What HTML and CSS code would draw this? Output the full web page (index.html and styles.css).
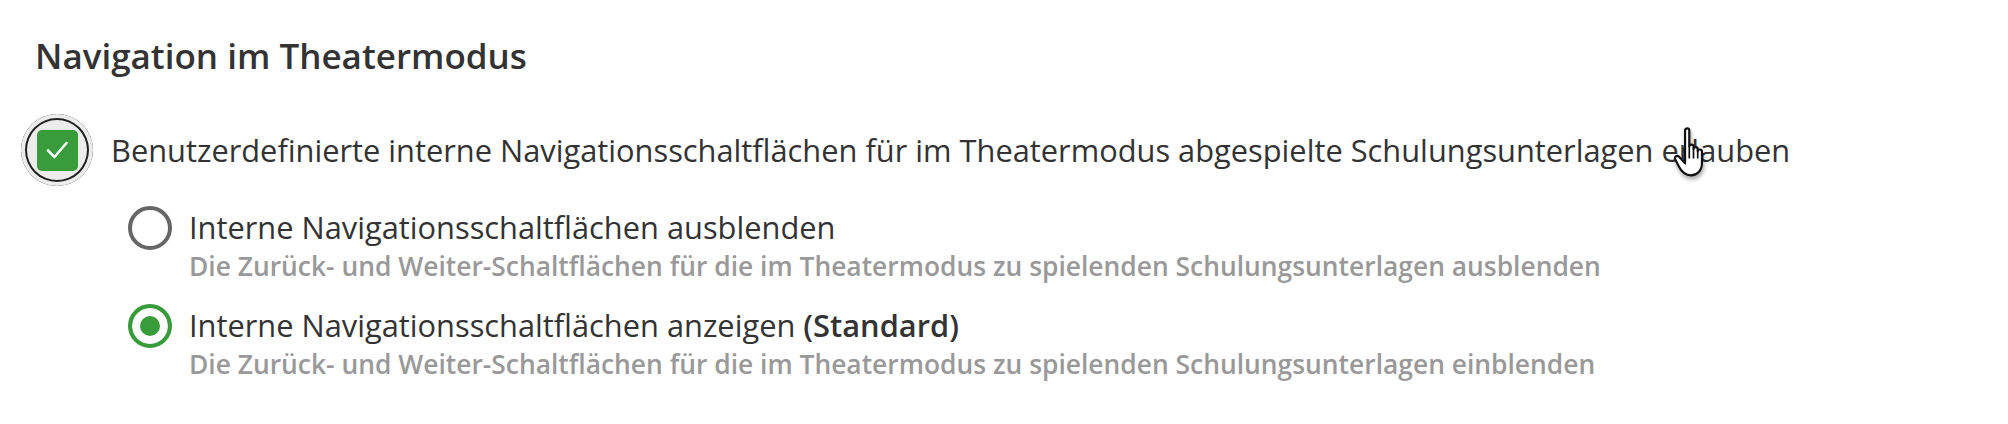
FILE: index.html
```html
<!DOCTYPE html>
<html lang="de">
<head>
    <meta charset="UTF-8">
    <meta name="viewport" content="width=device-width, initial-scale=1.0">
    <title>Navigation im Theatermodus</title>
    <link rel="stylesheet" href="styles.css">
</head>
<body>
    <div class="settings">
        <h2 class="section-title">Navigation im Theatermodus</h2>

        <label class="check-row">
            <span class="check-halo">
                <span class="check-box">
                    <svg width="24" height="20" viewBox="0 0 24 20"><path d="M3 10.5 L9.5 17 L21.5 3" fill="none" stroke="#fff" stroke-width="2.6" stroke-linecap="round" stroke-linejoin="round"/></svg>
                </span>
            </span>
            <span class="check-label">Benutzerdefinierte interne Navigationsschaltflächen für im Theatermodus abgespielte Schulungsunterlagen erlauben</span>
        </label>

        <div class="radio-group">
            <label class="radio-row">
                <span class="radio"></span>
                <span class="radio-text">
                    <span class="radio-label">Interne Navigationsschaltflächen ausblenden</span>
                    <span class="radio-desc">Die Zurück- und Weiter-Schaltflächen für die im Theatermodus zu spielenden Schulungsunterlagen ausblenden</span>
                </span>
            </label>
            <label class="radio-row">
                <span class="radio checked"></span>
                <span class="radio-text">
                    <span class="radio-label">Interne Navigationsschaltflächen anzeigen <b>(Standard)</b></span>
                    <span class="radio-desc">Die Zurück- und Weiter-Schaltflächen für die im Theatermodus zu spielenden Schulungsunterlagen einblenden</span>
                </span>
            </label>
        </div>
    </div>

    <!-- mouse pointer caught in the screenshot -->
    <svg class="pointer" width="41" height="53" viewBox="0 0 34 44">
        <path d="M10 3.5 C10 1.5 13.5 1.5 13.5 3.5 L13.5 17 C13.5 15 17 15 17 17 L17 19 C17 17 20.5 17 20.5 19 L20.5 21 C20.5 19 24 19 24 21 L24 31 C24 37 20 41 15 41 C10 41 7 38 4.5 33 L1.8 27.5 C0.8 25.5 3.5 23.8 5 25.5 L10 31 Z" fill="#fff" stroke="#111" stroke-width="1.8" stroke-linejoin="round"/>
        <path d="M13.5 17 L13.5 27 M17 19 L17 27 M20.5 21 L20.5 27" stroke="#111" stroke-width="1.4" fill="none"/>
    </svg>
</body>
</html>
```

FILE: styles.css
```css
body {
    margin: 0;
    padding: 0;
    background-color: #fff;
    font-family: 'Open Sans', sans-serif;
    color: #333;
}
.settings {
    padding: 32px 35px 20px 35px;
}
.section-title {
    margin: 0 0 34px 0;
    font-size: 35px;
    font-weight: 600;
    line-height: 48px;
    color: #333;
}
.check-row {
    display: flex;
    align-items: center;
    gap: 18px;
    margin-left: -14px;
}
.check-halo {
    flex: none;
    width: 72px;
    height: 72px;
    border-radius: 50%;
    background-color: #ececec;
    box-shadow: inset 0 0 0 4px #ececec, inset 0 0 0 6px #222;
    display: flex;
    align-items: center;
    justify-content: center;
}
.check-box {
    width: 41px;
    height: 41px;
    border-radius: 5px;
    background-color: #389c3b;
    display: flex;
    align-items: center;
    justify-content: center;
}
.check-label {
    font-size: 30.8px;
    line-height: 42px;
}
.radio-group {
    display: flex;
    flex-direction: column;
    gap: 20px;
    margin-top: 20px;
    padding-left: 93px;
}
.radio-row {
    display: flex;
    align-items: flex-start;
    gap: 17px;
}
.radio {
    flex: none;
    width: 44px;
    height: 44px;
    box-sizing: border-box;
    border: 4px solid #666;
    border-radius: 50%;
    background-color: #fff;
}
.radio.checked {
    border-color: #389c3b;
    background-color: #389c3b;
    box-shadow: inset 0 0 0 8px #fff;
}
.radio-text {
    display: flex;
    flex-direction: column;
}
.radio-label {
    font-size: 30.8px;
    line-height: 42px;
    color: #333;
}
.radio-label b {
    font-weight: 600;
}
.radio-desc {
    font-size: 26.4px;
    font-weight: 600;
    line-height: 36px;
    color: #999;
}
.pointer {
    position: absolute;
    left: 1673px;
    top: 126px;
    filter: drop-shadow(1px 3px 2px rgba(0, 0, 0, 0.35));
}
```
